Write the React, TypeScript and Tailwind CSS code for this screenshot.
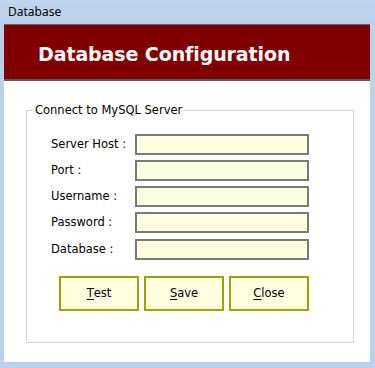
import React from "react";

const Field = ({ label }: { label: string }) => (
  <div className="flex items-center h-[21px]">
    <div className="w-[84px] text-[11.5px] text-black">{label}</div>
    <div className="w-[174px] h-[21px] border-2 border-[#7a7a7a] bg-[#ffffe0]" />
  </div>
);

const Btn = ({ first, rest }: { first: string; rest: string }) => (
  <button className="w-[80px] h-[35px] border-2 border-[#a0a000] bg-[#ffffe0] text-[11.5px] text-black flex items-center justify-center">
    <span className="underline underline-offset-2">{first}</span>
    <span>{rest}</span>
  </button>
);

export default function App() {
  return (
    <div
      className="w-[375px] h-[368px] bg-[#b9d1ea] flex flex-col overflow-hidden"
      style={{ fontFamily: '"DejaVu Sans", Verdana, sans-serif' }}
    >
      <div
        className="h-[24px] flex items-center pl-[8px] text-[12px] text-black bg-gradient-to-b from-[#c0d6ee] to-[#b9d1ea]"
        style={{ fontFamily: '"Noto Sans", "Open Sans", sans-serif' }}
      >
        Database
      </div>
      <div className="ml-[4px] w-[366px] h-[338px] bg-white border-t border-[#646464] flex flex-col">
        <div className="h-[50px] bg-[#800000] border-b-2 border-[#5a5a5a] flex items-center pl-[34px] pt-[4px] box-content">
          <span className="text-white font-bold text-[19px] tracking-[-0.1px]">Database Configuration</span>
        </div>
        <fieldset className="ml-[22px] mt-[22px] w-[328px] border border-[#d5d5d5] pl-[24px] pt-[17px] pb-[31px]">
          <legend className="-ml-[18px] px-[2px] text-[11.5px] leading-[14px] text-black">Connect to MySQL Server</legend>
          <div className="flex flex-col gap-[5px]">
            <Field label="Server Host :" />
            <Field label="Port :" />
            <Field label="Username :" />
            <Field label="Password :" />
            <div className="mt-[1px]">
              <Field label="Database :" />
            </div>
          </div>
          <div className="flex gap-[5px] mt-[16px] ml-[8px]">
            <Btn first="T" rest="est" />
            <Btn first="S" rest="ave" />
            <Btn first="C" rest="lose" />
          </div>
        </fieldset>
      </div>
    </div>
  );
}
